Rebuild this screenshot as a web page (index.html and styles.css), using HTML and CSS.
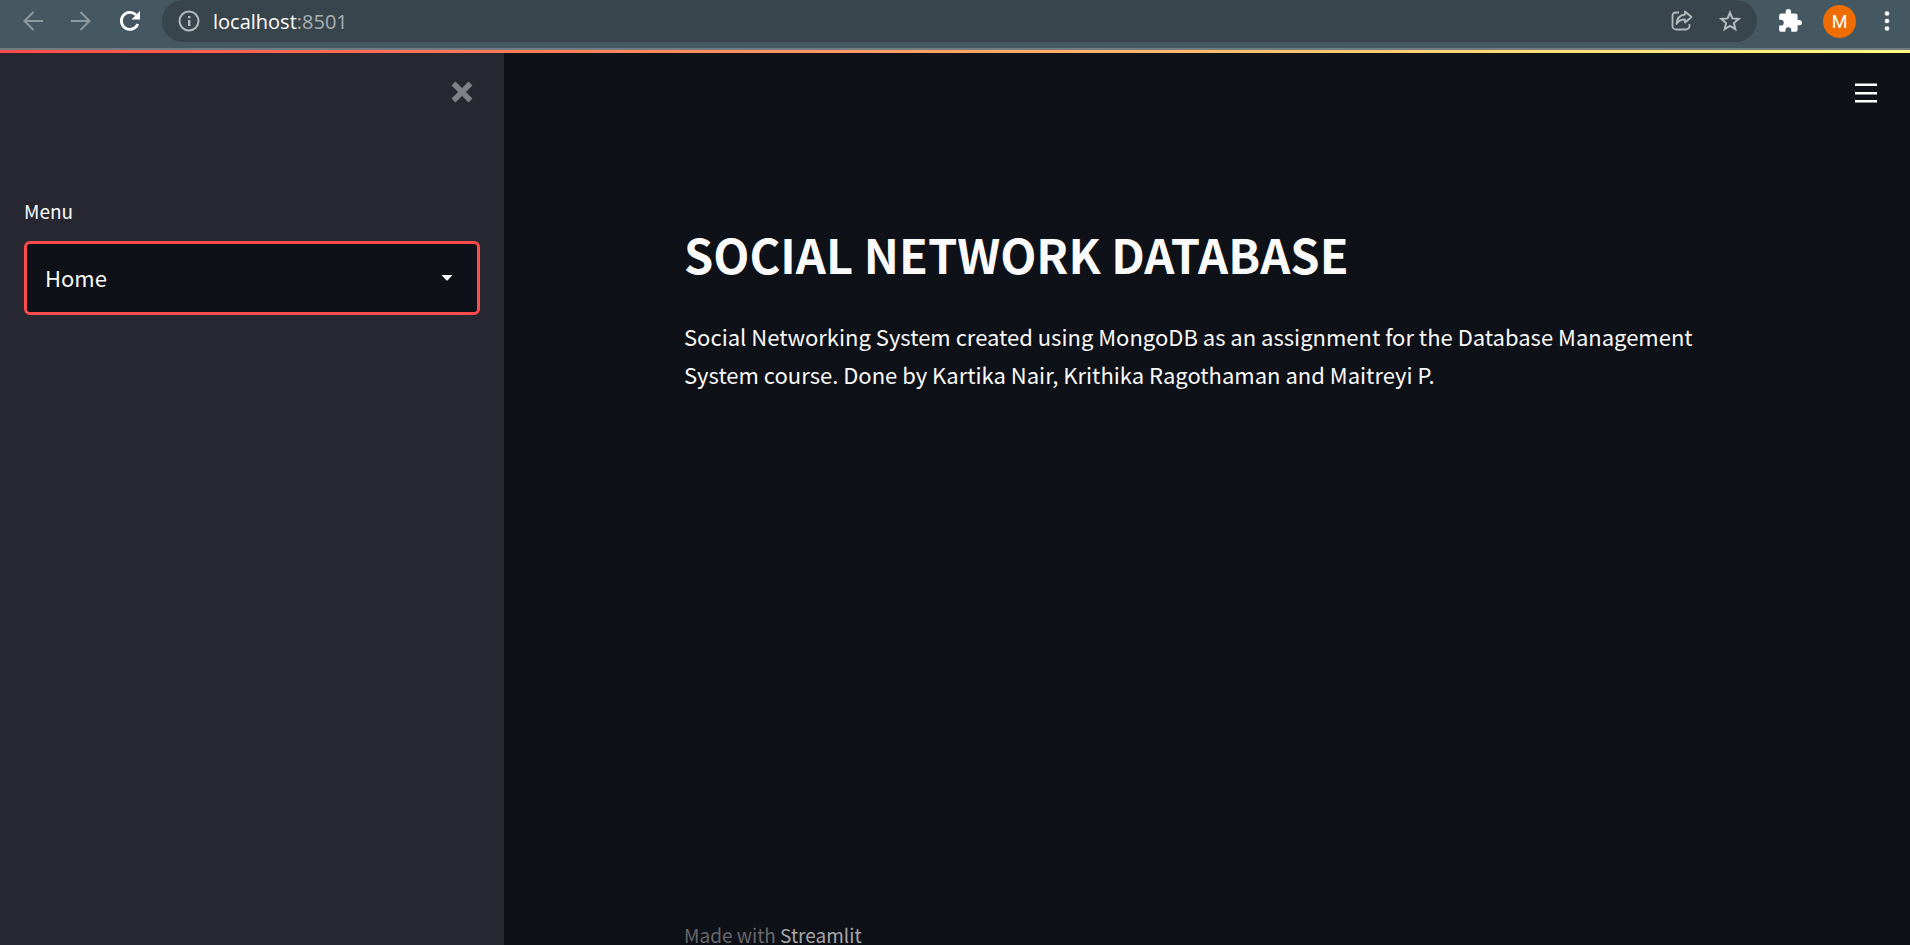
FILE: index.html
```
<!DOCTYPE html>
<html lang="en">
<head>
<meta charset="utf-8">
<meta name="viewport" content="width=device-width, initial-scale=1">
<title>Social Network Database</title>
<link rel="stylesheet" href="styles.css">
</head>
<body>
<header class="toolbar">
  <button class="tool dim" aria-label="Back"><svg width="20" height="20" viewBox="0 0 20 20" fill="none" stroke="currentColor" stroke-width="2"><path d="M20 10H2M10.500 1 1.500 10l9 9"/></svg></button>
  <button class="tool dim" aria-label="Forward"><svg width="20" height="20" viewBox="0 0 20 20" fill="none" stroke="currentColor" stroke-width="2"><path d="M0 10h18M9.500 1l9 9-9 9"/></svg></button>
  <button class="tool" aria-label="Reload"><svg width="22" height="22" viewBox="0 0 22 22"><path d="M18.800 14A8.500 8.500 0 1 1 17 5" fill="none" stroke="currentColor" stroke-width="2.800"/><path d="M21 1v8.500h-8.500z" fill="currentColor"/></svg></button>
  <div class="address">
    <button class="tool muted" aria-label="Site information"><svg width="22" height="22" viewBox="0 0 22 22"><circle cx="11" cy="11" r="9.500" fill="none" stroke="currentColor" stroke-width="2"/><path d="M10 10h2.400v6H10zM10 6h2.400v2.300H10z" fill="currentColor"/></svg></button>
    <a class="url" href="#"><span class="host">localhost</span>:8501</a>
    <button class="tool muted" aria-label="Share"><svg width="22" height="22" viewBox="0 0 22 22" fill="none" stroke="currentColor" stroke-width="1.800"><path d="M8 2.500H4.500A3 3 0 0 0 1.500 5.500V16a3.500 3.500 0 0 0 3.500 3.500h10a3.500 3.500 0 0 0 3.500-3.500v-2"/><path d="M14 1.500 20.500 7 14 12.500V9.500C10 9.500 7.500 10.500 5.500 14 6 8.500 9 5 14 4.500z" stroke-linejoin="round"/></svg></button>
    <button class="tool muted" aria-label="Bookmark"><svg width="22" height="22" viewBox="0 0 22 22" fill="none" stroke="currentColor" stroke-width="2"><path d="m11 2.600 2.400 5.800 6.200.5-4.700 4.100 1.400 6.100-5.300-3.200-5.300 3.200 1.400-6.100L2.400 8.900l6.200-.5z"/></svg></button>
  </div>
  <button class="tool" aria-label="Extensions"><svg width="26" height="26" viewBox="0 0 24 24" fill="currentColor"><path d="M20.500 11H19V7a2 2 0 0 0-2-2h-4V3.500a2.500 2.500 0 0 0-5 0V5H4a2 2 0 0 0-2 2v3.800h1.500a2.700 2.700 0 0 1 0 5.400H2V20a2 2 0 0 0 2 2h3.800v-1.500a2.700 2.700 0 0 1 5.400 0V22H17a2 2 0 0 0 2-2v-4h1.500a2.500 2.500 0 0 0 0-5z"/></svg></button>
  <button class="avatar" aria-label="Profile">M</button>
  <button class="tool kebab" aria-label="Browser menu"><svg width="6" height="20" viewBox="0 0 6 20" fill="currentColor"><circle cx="3" cy="2.500" r="2.300"/><circle cx="3" cy="10" r="2.300"/><circle cx="3" cy="17.500" r="2.300"/></svg></button>
</header>
<div class="stripe"></div>
<div class="app">
  <aside class="sidebar">
    <button class="tool close" aria-label="Close sidebar"><svg width="22" height="22" viewBox="0 0 22 22" fill="none" stroke="currentColor" stroke-width="5.500"><path d="m2.500 2.500 17 17M19.500 2.500l-17 17"/></svg></button>
    <label class="label" for="menu">Menu</label>
    <div class="picker">
      <select class="select" id="menu"><option>Home</option></select>
      <svg class="caret" width="12" height="6" viewBox="0 0 12 6" fill="currentColor"><path d="M.5 0h11L6.500 5.500h-1z"/></svg>
    </div>
  </aside>
  <main class="main">
    <button class="tool burger" aria-label="Main menu"><svg width="22" height="20" viewBox="0 0 22 20" fill="currentColor"><path d="M0 .5h22V3H0zM0 9h22v2.500H0zM0 17h22v2.500H0z"/></svg></button>
    <div class="content">
      <h1 class="title">SOCIAL NETWORK DATABASE</h1>
      <p class="intro">Social Networking System created using MongoDB as an assignment for the Database Management System course. Done by Kartika Nair, Krithika Ragothaman and Maitreyi P.</p>
      <footer class="footer">Made with <a class="brand" href="#">Streamlit</a></footer>
    </div>
  </main>
</div>
</body>
</html>
```
FILE: styles.css
```
* {
  box-sizing: border-box;
}

body {
  margin: 0;
  height: 100vh;
  display: flex;
  flex-direction: column;
  overflow: hidden;
  background: #0e1117;
  color: #fafafa;
  font-family: "Noto Sans CJK SC", sans-serif;
  font-size: 22px;
}

.toolbar {
  display: flex;
  align-items: flex-start;
  height: 50px;
  flex: none;
  padding: 0 20px 0 23px;
  background: #455760;
  border-bottom: 2px solid #6f7c81;
}

.tool {
  display: flex;
  align-items: center;
  flex: none;
  height: 42px;
  padding: 0;
  border: 0;
  background: none;
  color: #fff;
}

.toolbar > .tool {
  margin-right: 28px;
}

.toolbar > .tool.kebab {
  margin-right: 0;
}

.tool.dim {
  color: #8f9a9f;
}

.tool.muted {
  color: #b4babd;
}

.address {
  display: flex;
  flex: 1;
  align-items: center;
  gap: 26px;
  height: 42px;
  margin: 0 20px 0 -7px;
  padding: 0 16px;
  border-radius: 21px;
  background: #39454c;
}

.url {
  flex: 1;
  margin-left: -13px;
  color: #a9b0b3;
  font-family: "Open Sans", sans-serif;
  font-size: 20px;
  text-decoration: none;
}

.host {
  color: #fff;
}

.avatar {
  width: 33px;
  height: 33px;
  margin: 5px 28px 0 -8px;
  padding: 0;
  border: 0;
  border-radius: 50%;
  background: #ef6c00;
  color: #fff;
  font-family: Roboto, sans-serif;
  font-size: 18px;
}

.stripe {
  height: 3px;
  flex: none;
  background: linear-gradient(to right, #ff4b4b, #fffd80);
}

.app {
  display: flex;
  flex: 1;
  min-height: 0;
}

.sidebar {
  display: flex;
  flex-direction: column;
  width: 504px;
  flex: none;
  padding: 18px 24px;
  background: #262730;
}

.close {
  align-self: flex-end;
  margin-right: 7px;
  color: #808087;
}

.label {
  margin-top: 83px;
  font-size: 19px;
  line-height: 30px;
}

.picker {
  display: grid;
  align-items: center;
  margin-top: 15px;
}

.select {
  grid-area: 1 / 1;
  height: 74px;
  padding: 0 18px 2px;
  border: 3px solid #ff4b4b;
  border-radius: 6px;
  outline: 0;
  appearance: none;
  background: #0e1117;
  color: #fafafa;
  font: inherit;
}

.caret {
  grid-area: 1 / 1;
  justify-self: end;
  margin-right: 27px;
  pointer-events: none;
}

.main {
  display: flex;
  flex: 1;
  flex-direction: column;
  min-width: 0;
}

.burger {
  align-self: flex-end;
  margin: 19px 33px 0 0;
}

.content {
  display: flex;
  flex: 1;
  flex-direction: column;
  width: 100%;
  max-width: 1046px;
  margin: 0 auto;
}

.title {
  margin: 108px 0 0;
  font-size: 47px;
  font-weight: 700;
  line-height: 64px;
}

.intro {
  margin: 31px 0 0;
  line-height: 38px;
}

.footer {
  margin-top: auto;
  color: #66686c;
  font-size: 19px;
  line-height: 20px;
}

.brand {
  color: #a6a7a9;
  text-decoration: none;
}
```
